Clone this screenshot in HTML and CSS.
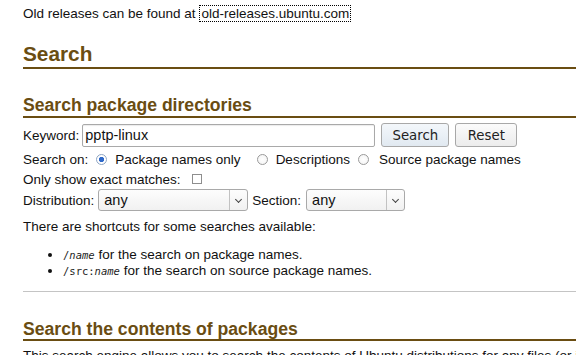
FILE: index.html
```html
<!DOCTYPE html>
<html lang="en">
<head>
<meta charset="utf-8">
<title>Ubuntu Packages Search</title>
<link rel="stylesheet" href="styles.css">
</head>
<body>
<div class="page">
  <p class="old">Old releases can be found at <a class="link" href="#">old-releases.ubuntu.com</a></p>

  <h2 class="h-main">Search</h2>

  <h3 class="h-sub">Search package directories</h3>

  <form class="search" action="#">
    <div class="row row-kw">
      <label class="lbl" for="kw">Keyword:</label>
      <input class="kw" id="kw" type="text" value="pptp-linux">
      <button class="btn btn-search" type="button">Search</button>
      <button class="btn btn-reset" type="button">Reset</button>
    </div>
    <div class="row row-on">
      <span class="lbl">Search on:</span>
      <input class="radio r1" type="radio" name="on" checked>
      <span class="opt">Package names only</span>
      <input class="radio r2" type="radio" name="on">
      <span class="opt">Descriptions</span>
      <input class="radio r3" type="radio" name="on">
      <span class="opt">Source package names</span>
    </div>
    <div class="row row-exact">
      <span class="lbl">Only show exact matches:</span>
      <input class="check" type="checkbox">
    </div>
    <div class="row row-dist">
      <span class="lbl">Distribution:</span>
      <span class="selwrap sel-dist"><select class="sel"><option>any</option></select></span>
      <span class="lbl lbl-sec">Section:</span>
      <span class="selwrap sel-sec"><select class="sel"><option>any</option></select></span>
    </div>
  </form>

  <p class="shortcuts">There are shortcuts for some searches available:</p>
  <ul class="sc-list">
    <li><code>/<em>name</em></code> for the search on package names.</li>
    <li><code>/src:<em>name</em></code> for the search on source package names.</li>
  </ul>

  <hr class="sep">

  <h3 class="h-sub h-contents">Search the contents of packages</h3>
  <p class="contents-text">This search engine allows you to search the contents of Ubuntu distributions for any files (or just parts of file names) that are part of packages.</p>
</div>
</body>
</html>
```

FILE: styles.css
```css
html, body {
  margin: 0;
  padding: 0;
  overflow: hidden;
  background: #ffffff;
}

body {
  font-family: "Liberation Sans", Arial, sans-serif;
  font-size: 13.5px;
  color: #111111;
}

.page {
  width: 1000px;
  padding-left: 23px;
}

.old {
  margin: 5px 0 0;
  line-height: 17px;
}

.link {
  color: #111111;
  text-decoration: none;
  outline: 1px dotted #000000;
  padding: 0 1px;
  margin-left: 1px;
}

.h-main {
  margin: 20px 0 0;
  font-size: 20.8px;
  line-height: 24px;
  font-weight: bold;
  color: #6a4d12;
  padding-bottom: 1px;
  border-bottom: 2px solid #6a4d12;
}

.h-sub {
  margin: 26px 0 0;
  font-size: 17.6px;
  line-height: 20px;
  font-weight: bold;
  color: #6a4d12;
  padding-bottom: 1px;
  border-bottom: 2px solid #6a4d12;
}

.search {
  margin: 5px 0 0;
}

.row {
  display: flex;
  align-items: center;
  white-space: nowrap;
}

.row-kw { height: 24px; }
.row-on { height: 22px; margin-top: 1px; }
.row-exact { height: 18px; }
.row-dist { height: 22px; margin-top: 1px; }

.kw {
  box-sizing: border-box;
  margin-left: 3px;
  width: 293px;
  height: 23px;
  border: 1px solid #a9a9a9;
  border-radius: 2px;
  padding: 0 2px;
  font-family: "Liberation Sans", Arial, sans-serif;
  font-size: 14.5px;
  color: #111111;
  box-shadow: inset 0 1px 1px rgba(0,0,0,0.08);
}

.btn {
  box-sizing: border-box;
  height: 24px;
  border: 1px solid #a8a8a8;
  border-radius: 3px;
  font-family: "DejaVu Sans", sans-serif;
  font-size: 13.3px;
  color: #222222;
  padding: 0;
  text-align: center;
}

.btn-search {
  width: 68px;
  margin-left: 6px;
  background: linear-gradient(#f3f7fb, #e1e9f1);
}

.btn-reset {
  width: 62px;
  margin-left: 6px;
  background: linear-gradient(#fbfbfb, #ececec);
}

.radio {
  -webkit-appearance: none;
  appearance: none;
  box-sizing: border-box;
  width: 11px;
  height: 11px;
  border-radius: 50%;
  border: 1px solid #9a9a9a;
  background: radial-gradient(circle, #ffffff 0, #f2f2f2 100%);
  margin: 0 8px 0 0;
  flex: none;
}

.radio:checked {
  border-color: #8fa6c4;
  background: radial-gradient(circle, #2f69c9 0, #2f69c9 2.3px, #ffffff 3px, #ffffff 100%);
}

.r1 { margin-left: 8px; }
.r2 { margin-left: 16px; }
.r3 { margin-left: 8px; margin-right: 10px; }

.check {
  -webkit-appearance: none;
  appearance: none;
  box-sizing: border-box;
  width: 10px;
  height: 10px;
  border: 1px solid #8e8e8e;
  background: #ffffff;
  margin: 0 0 0 11px;
  flex: none;
}

.selwrap {
  position: relative;
  display: inline-block;
  height: 22px;
  flex: none;
}

.sel-dist { width: 150px; margin-left: 4px; }
.sel-sec { width: 99px; margin-left: 5px; }
.lbl-sec { margin-left: 4px; }

.sel {
  -webkit-appearance: none;
  appearance: none;
  box-sizing: border-box;
  width: 100%;
  height: 22px;
  border: 1px solid #a9a9a9;
  border-radius: 3px;
  background: linear-gradient(#fdfdfd, #f1f1f1);
  font-family: "Liberation Sans", Arial, sans-serif;
  font-size: 14.5px;
  color: #111111;
  padding: 0 0 0 5px;
  margin: 0;
}

.selwrap::before {
  content: "";
  position: absolute;
  right: 18px;
  top: 1px;
  bottom: 1px;
  width: 1px;
  background: #c2c2c2;
}

.selwrap::after {
  content: "";
  position: absolute;
  right: 7px;
  top: 8px;
  width: 4px;
  height: 4px;
  border-right: 1px solid #444444;
  border-bottom: 1px solid #444444;
  transform: rotate(45deg);
  pointer-events: none;
}

.shortcuts {
  margin: 8px 0 0;
  line-height: 16px;
}

.sc-list {
  margin: 12px 0 0;
  padding-left: 40px;
  line-height: 15px;
}

.sc-list code {
  font-family: "DejaVu Sans Mono", monospace;
  font-size: 10.5px;
  color: #222222;
}

.sep {
  margin: 12px 0 0;
  border: 0;
  border-top: 1px solid #c4c4c4;
  height: 0;
}

.h-contents {
  margin-top: 27px;
  padding-bottom: 0;
}

.contents-text {
  margin: 7px 0 0;
  line-height: 16px;
  white-space: nowrap;
}
```
